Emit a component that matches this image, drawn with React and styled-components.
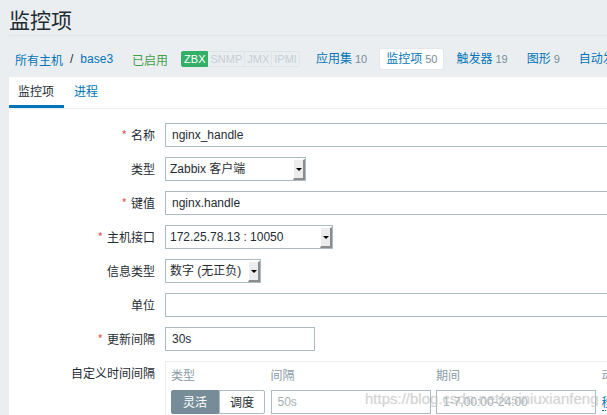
import React from "react";
import styled, { createGlobalStyle } from "styled-components";

const GlobalStyle = createGlobalStyle`
  html, body {
    margin: 0;
    padding: 0;
    background: #ebeef1;
    overflow: hidden;
  }
  body {
    font-family: "Liberation Sans", "Noto Sans CJK SC", sans-serif;
    font-size: 12px;
    color: #1f2c33;
  }
`;

const Page = styled.div`
  position: relative;
  width: 1000px;
  height: 415px;
  padding-left: 9px;
  box-sizing: border-box;
`;

const Header = styled.div`
  height: 36px;
  box-sizing: border-box;
  padding-top: 3px;
  border-bottom: 1px solid #dfe4e7;
  display: flex;
  align-items: center;
`;

const Title = styled.h1`
  margin: 0;
  font-size: 21px;
  font-weight: normal;
  font-family: "Noto Sans CJK SC", sans-serif;
  color: #1f2c33;
`;

const Nav = styled.div`
  height: 41px;
  box-sizing: border-box;
  padding-top: 5px;
  display: flex;
  align-items: center;
`;

const Crumbs = styled.div`
  display: flex;
  align-items: center;
  margin-left: 6px;
`;

const Link = styled.span`
  color: #0275b8;
`;

const Sep = styled.span`
  color: #1f2c33;
  margin: 0 7px;
`;

const Enabled = styled.span`
  color: #429e47;
  margin-left: 19px;
`;

const Badges = styled.div`
  display: flex;
  margin-left: 13px;
`;

const Badge = styled.span`
  height: 16px;
  line-height: 14px;
  box-sizing: border-box;
  padding: 0 2px;
  font-size: 11px;
  border: 1px solid ${(p) => (p.$on ? "#34af67" : "#dfe4e7")};
  border-left-width: ${(p) => (p.$first ? "1px" : "0")};
  background: ${(p) => (p.$on ? "#34af67" : "transparent")};
  color: ${(p) => (p.$on ? "#ffffff" : "#c5cfd4")};
  border-radius: ${(p) => (p.$first ? "2px 0 0 2px" : p.$last ? "0 2px 2px 0" : "0")};
`;

const NavItems = styled.div`
  display: flex;
  align-items: center;
  margin-left: 10px;
`;

const NavItem = styled.span`
  height: 20px;
  line-height: 20px;
  padding: 0 6px;
  margin-right: 7px;
  white-space: nowrap;
  color: #0275b8;
  border-radius: 2px;
  background: ${(p) => (p.$active ? "#ffffff" : "transparent")};
  box-shadow: ${(p) => (p.$active ? "0 0 0 1px #e4e8eb" : "none")};
`;

const Count = styled.span`
  color: #768d99;
  font-size: 11px;
  margin-left: 3px;
`;

const Panel = styled.div`
  background: #ffffff;
  height: 338px;
`;

const Tabs = styled.div`
  display: flex;
  height: 32px;
  box-sizing: border-box;
  border-bottom: 1px solid #ebeef1;
`;

const Tab = styled.div`
  padding: 0 10px 0 9px;
  margin-right: 1px;
  line-height: 28px;
  font-family: "Noto Sans CJK SC", sans-serif;
  color: ${(p) => (p.$active ? "#1f2c33" : "#0275b8")};
  border-bottom: 3px solid ${(p) => (p.$active ? "#0275b8" : "transparent")};
`;

const Form = styled.div`
  display: grid;
  grid-template-columns: 146px 1fr;
  column-gap: 10px;
  row-gap: 10px;
  padding-top: 14px;
`;

const Label = styled.div`
  text-align: right;
  line-height: 24px;
  height: 24px;
  font-family: "Noto Sans CJK SC", sans-serif;
  color: #1f2c33;
  white-space: nowrap;
`;

const Req = styled.span`
  color: #e45959;
  margin-right: 4px;
`;

const Input = styled.div`
  width: ${(p) => p.$w || 453}px;
  height: 24px;
  box-sizing: border-box;
  border: 1px solid #acbbc2;
  padding: 0 6px;
  line-height: 22px;
  color: ${(p) => (p.$muted ? "#a3b0b7" : "#1f2c33")};
  background: #ffffff;
  white-space: nowrap;
`;

const Select = styled.div`
  width: ${(p) => p.$w}px;
  height: 24px;
  box-sizing: border-box;
  border: 1px solid #acbbc2;
  display: flex;
  align-items: stretch;
  background: #ffffff;
`;

const SelectText = styled.span`
  flex: 1;
  padding-left: 4px;
  line-height: 22px;
  white-space: nowrap;
  color: #1f2c33;
`;

const SelectBtn = styled.span`
  width: 12px;
  box-sizing: border-box;
  margin: 1px 0 0 0;
  background: #ececec;
  border-top: 1px solid #ffffff;
  border-left: 1px solid #ffffff;
  border-right: 2px solid #8c8c8c;
  border-bottom: 2px solid #8c8c8c;
  display: flex;
  align-items: center;
  justify-content: center;
  &::after {
    content: "";
    border-left: 3px solid transparent;
    border-right: 3px solid transparent;
    border-top: 3px solid #000;
  }
`;

const IntervalBox = styled.div`
  width: 600px;
  box-sizing: border-box;
  border: 1px solid #ebeef1;
  padding: 1px 5px 4px;
  display: grid;
  grid-template-columns: 94px 160px 160px 60px;
  column-gap: 5.5px;
  row-gap: 3px;
`;

const ColHead = styled.div`
  line-height: 24px;
  height: 24px;
  color: #8a9ca6;
  font-family: "Noto Sans CJK SC", sans-serif;
`;

const Segmented = styled.div`
  display: flex;
  height: 24px;
`;

const SegBtn = styled.span`
  width: ${(p) => p.$w}px;
  box-sizing: border-box;
  text-align: center;
  line-height: 22px;
  font-family: "Noto Sans CJK SC", sans-serif;
  border: 1px solid ${(p) => (p.$active ? "#768d99" : "#acbbc2")};
  background: ${(p) => (p.$active ? "#768d99" : "#ffffff")};
  color: ${(p) => (p.$active ? "#ffffff" : "#1f2c33")};
  border-radius: ${(p) => (p.$first ? "2px 0 0 2px" : "0 2px 2px 0")};
`;

const ActionLink = styled.span`
  color: #0275b8;
  font-family: "Noto Sans CJK SC", sans-serif;
  border-bottom: 1px dotted #0275b8;
  align-self: center;
  justify-self: start;
  line-height: 16px;
`;

const Watermark = styled.div`
  position: absolute;
  left: ${(p) => p.$x}px;
  top: ${(p) => p.$y}px;
  font-size: 15px;
  font-family: "Liberation Sans", sans-serif;
  color: rgba(205, 205, 205, 0.6);
  text-shadow: 0 0 1px rgba(150, 150, 150, 0.35);
  white-space: nowrap;
  pointer-events: none;
`;

export default function App() {
  return (
    <>
      <GlobalStyle />
      <Page>
        <Header>
          <Title>监控项</Title>
        </Header>
        <Nav>
          <Crumbs>
            <Link>所有主机</Link>
            <Sep>/</Sep>
            <Link>base3</Link>
          </Crumbs>
          <Enabled>已启用</Enabled>
          <Badges>
            <Badge $on $first>ZBX</Badge>
            <Badge>SNMP</Badge>
            <Badge>JMX</Badge>
            <Badge $last>IPMI</Badge>
          </Badges>
          <NavItems>
            <NavItem>应用集<Count>10</Count></NavItem>
            <NavItem $active>监控项<Count>50</Count></NavItem>
            <NavItem>触发器<Count>19</Count></NavItem>
            <NavItem>图形<Count>9</Count></NavItem>
            <NavItem>自动发现规则</NavItem>
          </NavItems>
        </Nav>
        <Panel>
          <Tabs>
            <Tab $active>监控项</Tab>
            <Tab>进程</Tab>
          </Tabs>
          <Form>
            <Label><Req>*</Req>名称</Label>
            <Input>nginx_handle</Input>

            <Label>类型</Label>
            <Select $w={141}>
              <SelectText>Zabbix 客户端</SelectText>
              <SelectBtn />
            </Select>

            <Label><Req>*</Req>键值</Label>
            <Input>nginx.handle</Input>

            <Label><Req>*</Req>主机接口</Label>
            <Select $w={168}>
              <SelectText>172.25.78.13 : 10050</SelectText>
              <SelectBtn />
            </Select>

            <Label>信息类型</Label>
            <Select $w={96}>
              <SelectText>数字 (无正负)</SelectText>
              <SelectBtn />
            </Select>

            <Label>单位</Label>
            <Input />

            <Label><Req>*</Req>更新间隔</Label>
            <Input $w={150}>30s</Input>

            <Label>自定义时间间隔</Label>
            <IntervalBox>
              <ColHead>类型</ColHead>
              <ColHead>间隔</ColHead>
              <ColHead>期间</ColHead>
              <ColHead>动作</ColHead>
              <Segmented>
                <SegBtn $w={48} $active $first>灵活</SegBtn>
                <SegBtn $w={46}>调度</SegBtn>
              </Segmented>
              <Input $w={160} $muted>50s</Input>
              <Input $w={160} $muted>1-7,00:00-24:00</Input>
              <ActionLink>移除</ActionLink>
            </IntervalBox>
          </Form>
        </Panel>
        <Watermark $x={365} $y={390}>https://blog.csdn.net/csiniuxianfeng</Watermark>
      </Page>
    </>
  );
}
